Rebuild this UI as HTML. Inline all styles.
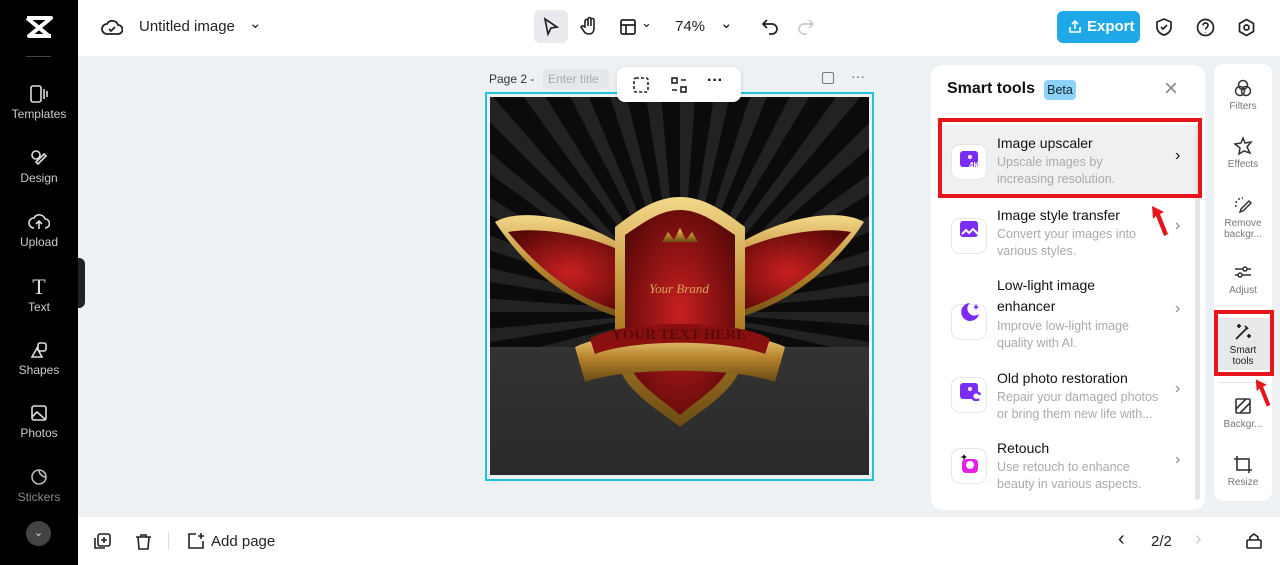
<!DOCTYPE html>
<html><head><meta charset="utf-8"><style>
*{margin:0;padding:0;box-sizing:border-box}
body{width:1280px;height:565px;overflow:hidden;background:#eef1f4;font-family:"Liberation Sans",sans-serif;position:relative;color:#111}
.abs{position:absolute}
.side{left:0;top:0;width:78px;height:565px;background:#000}
.si{position:absolute;left:0;width:78px;text-align:center;color:#ccc;font-size:12px}
.si svg{display:block;margin:0 auto 3px}
.top{left:78px;top:0;width:1202px;height:56px;background:#fff}
.bot{left:78px;top:517px;width:1202px;height:48px;background:#fff}
.panel{left:931px;top:65px;width:274px;height:445px;background:#fff;border-radius:12px}
.item{position:absolute;left:10px;width:254px}
.ic{position:absolute;left:10px;width:36px;height:36px;border:1px solid #e5e7ea;border-radius:9px;background:#fff}
.t{position:absolute;left:56px;font-size:14px;color:#111;line-height:21px}
.d{position:absolute;left:56px;font-size:12.5px;color:#aaa;line-height:16.5px}
.ch{position:absolute;left:234px;font-size:16px;color:#888}
.strip{left:1214px;top:64px;width:58px;height:437px;background:#fff;border-radius:10px}
.ti{position:absolute;left:0;width:58px;text-align:center;font-size:10px;color:#777;line-height:11px}
.ti svg{display:block;margin:0 auto 3px}
.z{z-index:5}
</style></head><body>
<div class="abs side">
 <svg class="abs" style="left:24px;top:14px" width="30" height="26" viewBox="0 0 30 26"><path d="M3 4h24L5 22h22M3 22h0" stroke="#fff" stroke-width="4" fill="none" stroke-linejoin="round"/><path d="M3 4l22 18" stroke="#fff" stroke-width="4"/></svg>
 <div class="abs" style="left:26px;top:56px;width:25px;height:1px;background:#444"></div>
 <div class="si" style="top:84px"><svg width="20" height="20" viewBox="0 0 20 20" fill="none" stroke="#ddd" stroke-width="1.6"><rect x="2" y="2" width="10" height="16" rx="2"/><path d="M15 5v10M18 7v6"/></svg>Templates</div>
 <div class="si" style="top:148px"><svg width="20" height="20" viewBox="0 0 20 20" fill="none" stroke="#ddd" stroke-width="1.6"><circle cx="7" cy="7" r="4"/><path d="M9 16l8-8-2-2-8 8z"/></svg>Design</div>
 <div class="si" style="top:212px"><svg width="22" height="20" viewBox="0 0 22 20" fill="none" stroke="#ddd" stroke-width="1.6"><path d="M6 16a5 5 0 010-10 6 6 0 0111 1 4 4 0 010 9M11 17V9M8 12l3-3 3 3"/></svg>Upload</div>
 <div class="si" style="top:276px"><div style="font-family:'Liberation Serif';font-size:22px;color:#ddd;line-height:22px;margin-bottom:2px">T</div>Text</div>
 <div class="si" style="top:340px"><svg width="20" height="20" viewBox="0 0 20 20" fill="none" stroke="#ddd" stroke-width="1.6"><path d="M3 17l5-9 5 9z"/><rect x="9" y="3" width="8" height="8" rx="2"/></svg>Shapes</div>
 <div class="si" style="top:403px"><svg width="20" height="20" viewBox="0 0 20 20" fill="none" stroke="#ddd" stroke-width="1.6"><rect x="3" y="3" width="14" height="14" rx="2"/><path d="M3 14l5-5 9 8"/></svg>Photos</div>
 <div class="si" style="top:467px;color:#888"><svg width="20" height="20" viewBox="0 0 20 20" fill="none" stroke="#bbb" stroke-width="1.6"><circle cx="10" cy="10" r="7"/><path d="M10 3a7 7 0 007 7"/></svg>Stickers</div>
 <div class="abs" style="left:26px;top:521px;width:25px;height:25px;border-radius:50%;background:#444;color:#ddd;font-size:11px;text-align:center;line-height:25px">⌄</div>
</div>
<div class="abs" style="left:78px;top:258px;width:7px;height:50px;background:#222;border-radius:0 6px 6px 0"></div>
<div class="abs top">
 <svg class="abs" style="left:23px;top:17px" width="22" height="20" viewBox="0 0 22 20" fill="none" stroke="#222" stroke-width="1.8"><path d="M6 17a5 5 0 010-10 6 6 0 0111 1 4 4 0 010 9z"/><path d="M8 12l2 2 4-4"/></svg>
 <div class="abs" style="left:61px;top:18px;font-size:15px;color:#222">Untitled image</div>
 <div class="abs" style="left:171px;top:14px;font-size:15px;color:#222">⌄</div>
 <div class="abs" style="left:456px;top:10px;width:34px;height:33px;background:#e8eaed;border-radius:6px"></div>
 <svg class="abs" style="left:464px;top:17px" width="18" height="20" viewBox="0 0 18 20" fill="none" stroke="#222" stroke-width="1.7"><path d="M3 2l12 8-6 1-3 6z"/></svg>
 <svg class="abs" style="left:501px;top:16px" width="20" height="20" viewBox="0 0 20 20" fill="none" stroke="#222" stroke-width="1.6"><path d="M6 11V5a1.5 1.5 0 013 0v5V3a1.5 1.5 0 013 0v7V4a1.5 1.5 0 013 0v8c0 4-2 6-5 6s-4-1-6-4l-2-3a1.5 1.5 0 012-1z"/></svg>
 <svg class="abs" style="left:541px;top:18px" width="18" height="18" viewBox="0 0 18 18" fill="none" stroke="#222" stroke-width="1.7"><rect x="2" y="2" width="14" height="14" rx="1.5"/><path d="M2 7h14M7 7v9"/></svg>
 <div class="abs" style="left:563px;top:15px;font-size:13px">⌄</div>
 <div class="abs" style="left:597px;top:18px;font-size:15px;color:#222">74%</div>
 <div class="abs" style="left:642px;top:14px;font-size:15px">⌄</div>
 <svg class="abs" style="left:683px;top:17px" width="18" height="18" viewBox="0 0 18 18" fill="none" stroke="#222" stroke-width="1.7"><path d="M6 3L2 7l4 4M2 7h9a5 5 0 010 10H8"/></svg>
 <svg class="abs" style="left:719px;top:17px" width="18" height="18" viewBox="0 0 18 18" fill="none" stroke="#ccc" stroke-width="1.7"><path d="M12 3l4 4-4 4M16 7H7a5 5 0 000 10h3"/></svg>
 <div class="abs" style="left:979px;top:11px;width:83px;height:32px;background:#1fa8e8;border-radius:6px;color:#fff;font-size:15px;font-weight:bold;line-height:32px;padding-left:30px">Export</div>
 <svg class="abs" style="left:990px;top:19px" width="14" height="15" viewBox="0 0 14 15" fill="none" stroke="#fff" stroke-width="1.6"><path d="M7 10V2M4 5l3-3 3 3M2 8v5h10V8"/></svg>
 <svg class="abs" style="left:1077px;top:17px" width="18" height="20" viewBox="0 0 18 20" fill="none" stroke="#222" stroke-width="1.7"><path d="M9 2l7 3v5c0 4-3 7-7 8-4-1-7-4-7-8V5z"/><path d="M6 10l2 2 4-4"/></svg>
 <svg class="abs" style="left:1118px;top:18px" width="19" height="19" viewBox="0 0 19 19" fill="none" stroke="#222" stroke-width="1.7"><circle cx="9.5" cy="9.5" r="8"/><path d="M7 7.5a2.5 2.5 0 115 0c0 2-2.5 2-2.5 4M9.5 14v.5"/></svg>
 <svg class="abs" style="left:1159px;top:18px" width="19" height="19" viewBox="0 0 19 19" fill="none" stroke="#222" stroke-width="1.7"><path d="M9.5 1.5l7 4v8l-7 4-7-4v-8z"/><circle cx="9.5" cy="9.5" r="2.5"/></svg>
</div>
<div class="abs" style="left:489px;top:72px;font-size:12px;color:#333">Page 2 -</div>
<div class="abs" style="left:543px;top:69px;width:66px;height:20px;background:#e4e7eb;border-radius:3px;font-size:12px;color:#aaa;padding:3px 5px">Enter title</div>
<div class="abs" style="left:822px;top:72px;width:12px;height:12px;border:1.5px solid #777;border-radius:2px"></div>
<div class="abs" style="left:851px;top:68px;font-size:14px;color:#666">···</div>
<div class="abs" style="left:485px;top:92px;width:389px;height:389px;border:2px solid #1ec3d8"></div>
<div class="abs" style="left:490px;top:97px;width:379px;height:378px;overflow:hidden;background:linear-gradient(#0a0a0a 0,#1a1a1a 60%,#2e2e2e 66%,#303030 100%)">
 <div class="abs" style="left:0;top:0;width:379px;height:250px;background:repeating-conic-gradient(from 0deg at 190px 215px,#222 0 4deg,#0b0b0b 4deg 9deg)"></div>
 <div class="abs" style="left:0;top:250px;width:379px;height:128px;background:linear-gradient(#333,#2a2a2a)"></div>
 <svg class="abs" style="left:0;top:0" width="379" height="378" viewBox="0 0 379 378">
  <defs><linearGradient id="g" x1="0" y1="0" x2="0" y2="1"><stop offset="0" stop-color="#f4d88a"/><stop offset=".5" stop-color="#b8862c"/><stop offset="1" stop-color="#6b4a12"/></linearGradient>
  <radialGradient id="r" cx=".5" cy=".5" r=".6"><stop offset="0" stop-color="#c82020"/><stop offset="1" stop-color="#5a0808"/></radialGradient></defs>
  <path d="M135 150C90 120 30 110 5 125c20 30 60 80 140 100z" fill="url(#g)"/><path d="M140 158C95 135 45 130 18 135c25 30 65 70 125 82z" fill="url(#r)"/>
  <path d="M244 150c45-30 105-40 130-25-20 30-60 80-140 100z" fill="url(#g)"/><path d="M239 158c45-23 95-28 122-23-25 30-65 70-125 82z" fill="url(#r)"/>
  <path d="M125 130c20-15 40-30 65-30s45 15 65 30v120c0 40-40 60-65 80-25-20-65-40-65-80z" fill="url(#g)"/>
  <path d="M135 138c18-12 35-25 55-25s37 13 55 25v110c0 35-35 52-55 70-20-18-55-35-55-70z" fill="url(#r)"/>
  <path d="M172 145l6-10 6 8 6-12 6 12 6-8 6 10z" fill="url(#g)"/>
  <path d="M85 250c40-20 170-20 210 0l-10 35c-40-15-150-15-190 0z" fill="url(#g)"/>
  <path d="M100 242c30-20 150-20 180 0l-5 15c-40-15-130-15-170 0z" fill="#8a1010"/>
  <text x="189" y="242" text-anchor="middle" font-family="Liberation Serif" font-weight="bold" font-size="15" fill="#5a0a0a">YOUR TEXT HERE</text>
  <text x="189" y="196" text-anchor="middle" font-family="Liberation Serif" font-style="italic" font-size="13" fill="#d8a855">Your Brand</text>
 </svg>
</div>
<div class="abs z" style="left:617px;top:67px;width:124px;height:35px;background:#fff;border-radius:8px;box-shadow:0 1px 4px rgba(0,0,0,.15)"></div>
<svg class="abs z" style="left:632px;top:76px" width="18" height="18" viewBox="0 0 18 18" fill="none" stroke="#222" stroke-width="1.6" stroke-dasharray="3 2"><rect x="2" y="2" width="14" height="14" rx="2"/></svg>
<svg class="abs z" style="left:670px;top:76px" width="18" height="18" viewBox="0 0 18 18" fill="none" stroke="#222" stroke-width="1.6"><rect x="2" y="2" width="5" height="5"/><rect x="11" y="11" width="5" height="5"/><path d="M11 4h5M2 14h5"/></svg>
<div class="abs z" style="left:707px;top:72px;font-size:16px;font-weight:bold">···</div>
<div class="abs panel">
 <div class="abs" style="left:16px;top:15px;font-size:16px;font-weight:bold">Smart tools</div>
 <div class="abs" style="left:113px;top:15px;width:32px;height:20px;background:#8cd3f7;border-radius:4px;font-size:12.5px;text-align:center;line-height:20px;color:#123">Beta</div>
 <div class="abs" style="left:233px;top:10px;font-size:24px;color:#888;font-weight:300">×</div>
 <div class="abs" style="left:17px;top:53px;width:244px;height:1px;background:#eee"></div>
 <div class="abs" style="left:264px;top:60px;width:5px;height:375px;background:#e4e4e4;border-radius:3px"></div>
 <div class="item" style="top:60px;height:72px;background:#eef0f2;border-radius:6px"><div class="ic" style="top:19px"></div><div class="t" style="top:8px">Image upscaler</div><div class="d" style="top:29px">Upscale images by<br>increasing resolution.</div><div class="ch" style="top:22px;color:#111">›</div></div>
 <div class="item" style="top:140px"><div class="ic" style="top:13px"></div><div class="t" style="top:0">Image style transfer</div><div class="d" style="top:21px">Convert your images into<br>various styles.</div><div class="ch" style="top:12px">›</div></div>
 <div class="item" style="top:210px"><div class="ic" style="top:29px"></div><div class="t" style="top:0">Low-light image<br>enhancer</div><div class="d" style="top:43px">Improve low-light image<br>quality with AI.</div><div class="ch" style="top:25px">›</div></div>
 <div class="item" style="top:303px"><div class="ic" style="top:9px"></div><div class="t" style="top:0">Old photo restoration</div><div class="d" style="top:21px">Repair your damaged photos<br>or bring them new life with...</div><div class="ch" style="top:12px">›</div></div>
 <div class="item" style="top:373px"><div class="ic" style="top:10px"></div><div class="t" style="top:0">Retouch</div><div class="d" style="top:21px">Use retouch to enhance<br>beauty in various aspects.</div><div class="ch" style="top:13px">›</div></div>
 <svg class="abs" style="left:29px;top:86px" width="22" height="18" viewBox="0 0 22 18"><rect x="0" y="0" width="18" height="16" rx="3" fill="#7b2cf5"/><circle cx="10" cy="6" r="2" fill="#fff"/><text x="9" y="17" font-size="8" font-weight="bold" fill="#fff" font-family="Liberation Sans">4K</text></svg>
 <svg class="abs" style="left:29px;top:156px" width="22" height="18" viewBox="0 0 22 18"><rect x="0" y="0" width="18" height="16" rx="3" fill="#7b2cf5"/><path d="M2 13l4-4 3 3 4-4 6 6" stroke="#fff" stroke-width="2" fill="none"/></svg>
 <svg class="abs" style="left:29px;top:236px" width="22" height="22" viewBox="0 0 22 22"><path d="M10 2a9 9 0 109 11A7 7 0 0110 2z" fill="#7b2cf5"/><path d="M16 3l1 2 2 1-2 1-1 2-1-2-2-1 2-1z" fill="#7b2cf5"/></svg>
 <svg class="abs" style="left:29px;top:318px" width="22" height="18" viewBox="0 0 22 18"><rect x="0" y="0" width="18" height="16" rx="3" fill="#7b2cf5"/><circle cx="10" cy="6" r="2" fill="#fff"/><path d="M20 12a4 4 0 10-1 4" stroke="#7b2cf5" stroke-width="2.5" fill="#fff"/></svg>
 <svg class="abs" style="left:29px;top:389px" width="20" height="20" viewBox="0 0 20 20"><rect x="2" y="5" width="16" height="14" rx="4" fill="#e51ee8"/><circle cx="10" cy="11" r="4" fill="#fff"/><path d="M4 0l1 2 2 1-2 1-1 2-1-2-2-1 2-1z" fill="#111"/></svg>
</div>
<div class="abs" style="left:938px;top:118px;width:264px;height:80px;border:4px solid #e8141c"></div>
<svg class="abs" style="left:1150px;top:204px" width="22" height="34" viewBox="0 0 22 34"><path d="M2 2l12 6-4 2 8 20-4 2-8-20-3 3z" fill="#e8141c"/></svg>
<div class="abs strip">
 <div class="ti" style="top:14px"><svg width="20" height="20" viewBox="0 0 20 20" fill="none" stroke="#333" stroke-width="1.5"><circle cx="10" cy="7" r="4.5"/><circle cx="7" cy="13" r="4.5"/><circle cx="13" cy="13" r="4.5"/></svg>Filters</div>
 <div class="ti" style="top:72px"><svg width="20" height="20" viewBox="0 0 20 20" fill="none" stroke="#333" stroke-width="1.5"><path d="M10 2l2 5 6-1-4 5 3 6-6-2-5 3 1-6-5-4 6-1z"/></svg>Effects</div>
 <div class="ti" style="top:131px"><svg width="20" height="20" viewBox="0 0 20 20" fill="none" stroke="#333" stroke-width="1.5"><path d="M8 14l8-8 2 2-8 8-3 1z"/><path d="M3 12a7 7 0 017-9" stroke-dasharray="2 2"/></svg>Remove<br>backgr...</div>
 <div class="ti" style="top:198px"><svg width="20" height="20" viewBox="0 0 20 20" fill="none" stroke="#333" stroke-width="1.5"><path d="M2 7h16M2 13h16"/><circle cx="12" cy="7" r="2" fill="#fff"/><circle cx="7" cy="13" r="2" fill="#fff"/></svg>Adjust</div>
 <div class="abs" style="left:2px;top:254px;width:54px;height:52px;background:#e6e8ea"></div>
 <div class="ti" style="top:258px;color:#222"><svg width="20" height="20" viewBox="0 0 20 20" fill="none" stroke="#222" stroke-width="1.8"><path d="M3 17L14 6M12 4l3 3"/><path d="M6 2v4M4 4h4M16 12v4M14 14h4"/></svg>Smart<br>tools</div>
 <div class="abs" style="left:4px;top:318px;width:50px;height:1px;background:#e5e5e5"></div>
 <div class="ti" style="top:332px"><svg width="20" height="20" viewBox="0 0 20 20" fill="none" stroke="#333" stroke-width="1.6"><rect x="3" y="3" width="14" height="14" rx="1"/><path d="M3 13L13 3M7 17L17 7"/></svg>Backgr...</div>
 <div class="ti" style="top:390px"><svg width="20" height="20" viewBox="0 0 20 20" fill="none" stroke="#333" stroke-width="1.6"><rect x="4" y="5" width="12" height="11"/><path d="M4 2v3M16 16v3M1 5h3M16 16h3"/></svg>Resize</div>
</div>
<div class="abs" style="left:1214px;top:310px;width:60px;height:66px;border:4px solid #e8141c"></div>
<svg class="abs" style="left:1254px;top:376px" width="20" height="34" viewBox="0 0 22 34"><path d="M2 2l12 6-4 2 8 20-4 2-8-20-3 3z" fill="#e8141c"/></svg>
<div class="abs bot">
 <svg class="abs" style="left:16px;top:16px" width="17" height="17" viewBox="0 0 17 17" fill="none" stroke="#222" stroke-width="1.6"><rect x="4" y="1" width="12" height="12" rx="2"/><path d="M1 5v10h10M10 4v6M7 7h6"/></svg>
 <svg class="abs" style="left:57px;top:16px" width="17" height="17" viewBox="0 0 17 17" fill="none" stroke="#222" stroke-width="1.6"><path d="M1 4h15M6 4V2h5v2M3 4l1 12h9l1-12"/></svg>
 <div class="abs" style="left:90px;top:15px;width:1px;height:18px;background:#ddd"></div>
 <svg class="abs" style="left:109px;top:15px" width="18" height="18" viewBox="0 0 18 18" fill="none" stroke="#222" stroke-width="1.6"><path d="M9 2H2v14h14V9M14 1v6M11 4h6"/></svg>
 <div class="abs" style="left:133px;top:16px;font-size:15px;color:#222">Add page</div>
 <div class="abs" style="left:1040px;top:11px;font-size:20px;color:#222">‹</div>
 <div class="abs" style="left:1073px;top:16px;font-size:15px;color:#222">2/2</div>
 <div class="abs" style="left:1117px;top:11px;font-size:20px;color:#ccc">›</div>
 <svg class="abs" style="left:1167px;top:15px" width="18" height="18" viewBox="0 0 18 18" fill="none" stroke="#222" stroke-width="1.6"><rect x="2" y="8" width="14" height="8" rx="1"/><path d="M5 8V5l4-3 4 3v3"/></svg>
</div>
</body></html>
